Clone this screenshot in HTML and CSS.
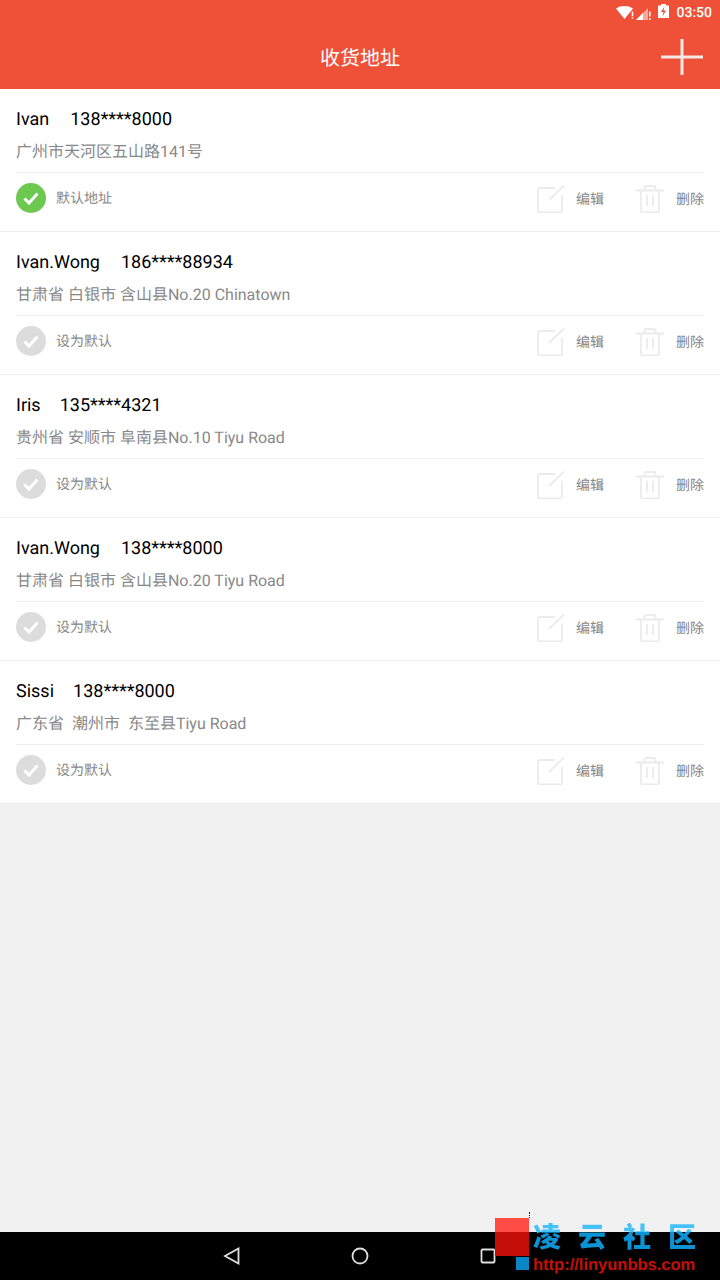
FILE: index.html
```html
<!DOCTYPE html>
<html lang="zh-CN">
<head>
    <meta charset="UTF-8">
    <meta name="viewport" content="width=device-width, initial-scale=1.0">
    <title>收货地址</title>
    <link rel="stylesheet" href="styles.css">
</head>
<body>
    <svg class="icon-defs" width="0" height="0">
        <symbol id="edit" viewBox="0 0 28 28">
            <path d="M18 3H3a2 2 0 0 0-2 2v21a1.500 1.500 0 0 0 1.500 1.500h21A1.500 1.500 0 0 0 25 26V10" fill="none" stroke="#eaecea" stroke-width="1.800"/>
            <path d="M12 15 27 0.500" fill="none" stroke="#eaecea" stroke-width="1.800"/>
        </symbol>
        <symbol id="trash" viewBox="0 0 28 28">
            <path d="M0 5.500h28M8.500 5V3A2 2 0 0 1 10.500 1h7a2 2 0 0 1 2 2V5M5 6v19.500a2 2 0 0 0 2 2h14a2 2 0 0 0 2-2V6M11 10v11M17 10v11" fill="none" stroke="#eaecea" stroke-width="1.800"/>
        </symbol>
        <symbol id="check" viewBox="0 0 30 30">
            <path d="M8.500 15.500 13 20l8.500-9.500" fill="none" stroke="#fff" stroke-width="3"/>
        </symbol>
    </svg>

    <div class="page">
        <div class="header">
            <div class="status-bar">
                <svg class="wifi" width="19" height="13" viewBox="0 0 19 13">
                    <path d="M0 2.500C4.500 -0.800 12 -0.800 17 2.500L8.500 13Z" fill="#fff"/>
                    <path d="M15.500 5.500h2v5h-2zM15.500 11.200h2v1.800h-2z" fill="#fff" stroke="#ee5138" stroke-width="0.500"/>
                </svg>
                <svg class="signal" width="15" height="12" viewBox="0 0 15 12">
                    <path d="M0 12 12 0v12Z" fill="#fff" opacity="0.5"/>
                    <path d="M0 12 7 5v7Z" fill="#fff"/>
                    <path d="M13 3.500h1.600v5H13zM13 10h1.600v2H13z" fill="#fff"/>
                </svg>
                <svg class="battery" width="11" height="14" viewBox="0 0 11 14">
                    <path d="M3 0h5v1.500h3V14H0V1.500h3Z" fill="#fff"/>
                    <path d="M6.500 2.500 3 8h2.500L4.500 12.500 8 6.500H5.500Z" fill="#ee5138"/>
                </svg>
                <span class="clock">03:50</span>
            </div>
            <div class="title-bar">
                <h1>收货地址</h1>
                <svg class="add-icon" width="42" height="36" viewBox="0 0 42 36">
                    <path d="M0 18h42M21 0v36" fill="none" stroke="#f3e9e6" stroke-width="3"/>
                </svg>
            </div>
        </div>

        <div class="address-list">
            <div class="address-item">
                <div class="contact"><span class="contact-name gap-wide">Ivan</span><span>138****8000</span></div>
                <div class="address-text">广州市天河区五山路141号</div>
                <div class="actions">
                    <svg class="check-icon is-default" width="30" height="30"><use href="#check"/></svg>
                    <span class="default-label">默认地址</span>
                    <svg class="edit-icon" width="28" height="28"><use href="#edit"/></svg>
                    <span class="action-label">编辑</span>
                    <svg class="trash-icon" width="28" height="28"><use href="#trash"/></svg>
                    <span class="action-label">删除</span>
                </div>
            </div>
            <div class="address-item">
                <div class="contact"><span class="contact-name gap-wide">Ivan.Wong</span><span>186****88934</span></div>
                <div class="address-text">甘肃省 白银市 含山县No.20 Chinatown</div>
                <div class="actions">
                    <svg class="check-icon" width="30" height="30"><use href="#check"/></svg>
                    <span class="default-label">设为默认</span>
                    <svg class="edit-icon" width="28" height="28"><use href="#edit"/></svg>
                    <span class="action-label">编辑</span>
                    <svg class="trash-icon" width="28" height="28"><use href="#trash"/></svg>
                    <span class="action-label">删除</span>
                </div>
            </div>
            <div class="address-item">
                <div class="contact"><span class="contact-name gap-narrow">Iris</span><span>135****4321</span></div>
                <div class="address-text">贵州省 安顺市 阜南县No.10 Tiyu Road</div>
                <div class="actions">
                    <svg class="check-icon" width="30" height="30"><use href="#check"/></svg>
                    <span class="default-label">设为默认</span>
                    <svg class="edit-icon" width="28" height="28"><use href="#edit"/></svg>
                    <span class="action-label">编辑</span>
                    <svg class="trash-icon" width="28" height="28"><use href="#trash"/></svg>
                    <span class="action-label">删除</span>
                </div>
            </div>
            <div class="address-item">
                <div class="contact"><span class="contact-name gap-wide">Ivan.Wong</span><span>138****8000</span></div>
                <div class="address-text">甘肃省 白银市 含山县No.20 Tiyu Road</div>
                <div class="actions">
                    <svg class="check-icon" width="30" height="30"><use href="#check"/></svg>
                    <span class="default-label">设为默认</span>
                    <svg class="edit-icon" width="28" height="28"><use href="#edit"/></svg>
                    <span class="action-label">编辑</span>
                    <svg class="trash-icon" width="28" height="28"><use href="#trash"/></svg>
                    <span class="action-label">删除</span>
                </div>
            </div>
            <div class="address-item">
                <div class="contact"><span class="contact-name gap-narrow">Sissi</span><span>138****8000</span></div>
                <div class="address-text">广东省&nbsp; 潮州市&nbsp; 东至县Tiyu Road</div>
                <div class="actions">
                    <svg class="check-icon" width="30" height="30"><use href="#check"/></svg>
                    <span class="default-label">设为默认</span>
                    <svg class="edit-icon" width="28" height="28"><use href="#edit"/></svg>
                    <span class="action-label">编辑</span>
                    <svg class="trash-icon" width="28" height="28"><use href="#trash"/></svg>
                    <span class="action-label">删除</span>
                </div>
            </div>
        </div>

        <div class="nav-bar">
            <svg width="18" height="18" viewBox="0 0 18 18">
                <path d="M15.500 1.500v15L2 9Z" fill="none" stroke="#dedede" stroke-width="1.800"/>
            </svg>
            <svg width="18" height="18" viewBox="0 0 18 18">
                <circle cx="9" cy="9" r="7.500" fill="none" stroke="#dedede" stroke-width="1.800"/>
            </svg>
            <svg width="18" height="18" viewBox="0 0 18 18">
                <rect x="2.500" y="2.500" width="13" height="13" rx="1" fill="none" stroke="#dedede" stroke-width="1.800"/>
            </svg>
        </div>
    </div>

    <div class="watermark">
        <div class="wm-dots"></div>
        <div class="wm-red"></div>
        <div class="wm-blue"></div>
        <div class="wm-title">凌云社区</div>
        <div class="wm-url">http://linyunbbs.com</div>
    </div>
</body>
</html>
```

FILE: styles.css
```css
* {
    margin: 0;
    padding: 0;
    box-sizing: border-box;
}

body {
    width: 720px;
    height: 1280px;
    overflow: hidden;
    position: relative;
    font-family: Roboto, "Noto Sans CJK SC", sans-serif;
    text-rendering: geometricPrecision;
    background: #f1f1f1;
}

.icon-defs {
    position: absolute;
}

.page {
    height: 1280px;
    display: flex;
    flex-direction: column;
}

.header {
    height: 89px;
    background: #ee5138;
    color: #fff;
}

.status-bar {
    height: 25px;
    display: flex;
    align-items: center;
    justify-content: flex-end;
    padding-right: 8px;
}

.wifi {
    margin-right: 1px;
}

.signal {
    margin: 3px 7px 0 0;
}

.battery {
    margin: 0 7px 3px 0;
}

.clock {
    font-size: 14px;
    font-weight: 500;
}

.title-bar {
    height: 64px;
    display: flex;
    align-items: center;
    justify-content: center;
    position: relative;
}

.title-bar h1 {
    font-size: 20px;
    font-weight: 400;
    margin-top: -2px;
}

.add-icon {
    position: absolute;
    right: 17px;
    top: 14px;
}

.address-item {
    height: 143px;
    padding: 16px 16px 0;
    background: #fff;
    border-bottom: 1px solid #efefef;
}

.contact {
    height: 28px;
    display: flex;
    align-items: center;
    font-size: 18px;
    color: #000;
}

.contact-name {
    margin-right: 20px;
}

.gap-wide {
    margin-right: 21px;
}

.gap-narrow {
    margin-right: 19px;
}

.address-text {
    height: 40px;
    padding-top: 9px;
    font-size: 16px;
    line-height: 20px;
    color: #888;
    border-bottom: 1px solid #efefef;
}

.actions {
    height: 58px;
    display: flex;
    align-items: center;
    padding: 10px 0 18px;
    font-size: 14px;
    line-height: 20px;
    color: #888;
}

.check-icon {
    background: #dcdcdc;
    border-radius: 50%;
    margin-right: 10px;
}

.is-default {
    background: #6cc84f;
}

.default-label {
    margin: 2px auto 0 0;
}

.edit-icon {
    margin: 2px 11px 0 0;
}

.action-label {
    margin-top: 4px;
}

.trash-icon {
    margin: 2px 12px 0 32px;
}

.nav-bar {
    margin-top: auto;
    height: 48px;
    background: #000;
    display: flex;
    align-items: center;
    justify-content: center;
    gap: 110px;
}

.watermark {
    position: absolute;
    left: 495px;
    top: 1218px;
    width: 225px;
    height: 62px;
}

.wm-dots {
    position: absolute;
    left: 34px;
    top: -6px;
    height: 6px;
    border-left: 1px dotted #222;
}

.wm-red {
    position: absolute;
    left: 0;
    top: 0;
    width: 34px;
    height: 38px;
    background: linear-gradient(#ff4c44 14px, #c40f08 14px);
}

.wm-blue {
    position: absolute;
    left: 21px;
    top: 39px;
    width: 13px;
    height: 13px;
    background: #0a86c6;
}

.wm-title {
    position: absolute;
    left: 38px;
    top: 1px;
    font-family: "Noto Sans CJK SC", sans-serif;
    font-size: 28px;
    line-height: 34px;
    font-weight: 900;
    letter-spacing: 17px;
    white-space: nowrap;
    color: transparent;
    background: linear-gradient(#44c2fa 13px, #0b93d6 13px);
    -webkit-background-clip: text;
    background-clip: text;
}

.wm-url {
    position: absolute;
    left: 38px;
    top: 38px;
    font-family: "Liberation Sans", sans-serif;
    font-size: 16.5px;
    line-height: 18px;
    font-weight: 700;
    white-space: nowrap;
    color: #c40f08;
}
```
